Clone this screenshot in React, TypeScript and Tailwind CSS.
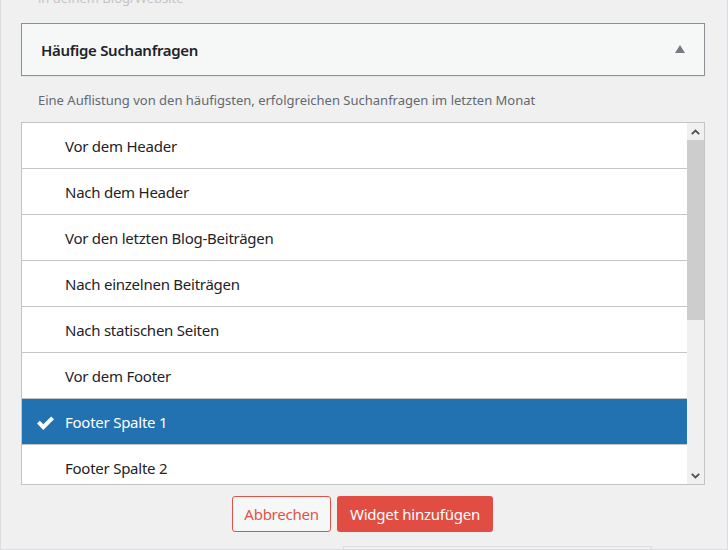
const rows = [
  "Vor dem Header",
  "Nach dem Header",
  "Vor den letzten Blog-Beiträgen",
  "Nach einzelnen Beiträgen",
  "Nach statischen Seiten",
  "Vor dem Footer",
  "Footer Spalte 1",
  "Footer Spalte 2",
];

function Chevron({ up }: { up?: boolean }) {
  return (
    <svg width="9" height="6" viewBox="0 0 9 6">
      <path
        d={up ? "M0.8 5.2 L4.5 1.5 L8.2 5.2" : "M0.8 0.8 L4.5 4.5 L8.2 0.8"}
        fill="none"
        stroke="#505050"
        strokeWidth="1.8"
      />
    </svg>
  );
}

function Tick() {
  return (
    <svg width="17" height="14" viewBox="0 0 17 14">
      <path d="M0 7.5 L2.8 4.8 L6.3 8.3 L14.2 0.4 L17 3.2 L6.3 13.9 Z" fill="#ffffff" />
    </svg>
  );
}

export default function App() {
  return (
    <div className="w-[728px] h-[550px] overflow-hidden bg-[#f0f0f0] border-x border-b border-[#dcdcde] font-['Noto_Sans',sans-serif] flex flex-col">
      <p className="-mt-[11px] h-[12px] pl-[37px] text-[13px] leading-[18px] text-[#c3c4c7]">
        in deinem Blog/Website
      </p>

      <div className="ml-[20px] mt-[22px] w-[684px] h-[53px] border border-[#8c8f94] bg-[#f6f7f7] shadow-[0_1px_1px_rgba(0,0,0,0.04)] flex items-center justify-between pl-[19px] pr-[19px] pt-[2px]">
        <h3 className="text-[15px] font-semibold tracking-[-0.3px] text-[#1d2327]">Häufige Suchanfragen</h3>
        <svg width="10" height="8" viewBox="0 0 10 8" className="-mt-[3px]">
          <path d="M5 0 L10 8 L0 8 Z" fill="#787c82" />
        </svg>
      </div>

      <p className="ml-[37px] mt-[15px] text-[13px] leading-[18px] text-[#646970]">
        Eine Auflistung von den häufigsten, erfolgreichen Suchanfragen im letzten Monat
      </p>

      <div className="ml-[20px] mt-[13px] w-[684px] h-[363px] border border-[#c3c4c7] bg-white flex overflow-hidden">
        <ul className="flex-1">
          {rows.map((r) => {
            const sel = r === "Footer Spalte 1";
            return (
              <li
                key={r}
                className={`h-[46px] border-b border-[#c3c4c7] flex items-center pt-[2px] text-[15px] tracking-[-0.25px] ${
                  sel ? "bg-[#2271b1] text-white" : "text-[#1d2327]"
                }`}
              >
                <span className="w-[43px] flex pl-[15px]">{sel && <Tick />}</span>
                {r}
              </li>
            );
          })}
        </ul>
        <div className="w-[17px] bg-[#f0f0f0] flex flex-col">
          <div className="h-[17px] flex items-center justify-center">
            <Chevron up />
          </div>
          <div className="h-[180px] bg-[#cdcdcd]" />
          <div className="flex-1" />
          <div className="h-[17px] flex items-center justify-center">
            <Chevron />
          </div>
        </div>
      </div>

      <div className="mt-[11px] flex gap-[6px] pl-[231px]">
        <button className="h-[36px] w-[99px] pt-[1px] rounded-[3px] border border-[#e0534a] bg-[#f6f7f7] text-[15px] tracking-[-0.25px] text-[#e0534a]">
          Abbrechen
        </button>
        <button className="h-[36px] w-[156px] pt-[1px] rounded-[3px] bg-[#e14d43] text-[15px] tracking-[-0.25px] text-white">
          Widget hinzufügen
        </button>
      </div>

      <div className="ml-[342px] mt-[14px] w-[309px] flex-1 border-x border-t border-[#dcdcde]" />
    </div>
  );
}
